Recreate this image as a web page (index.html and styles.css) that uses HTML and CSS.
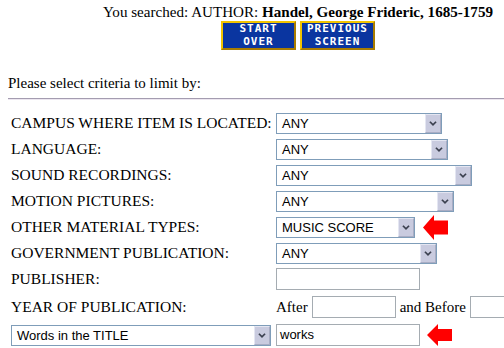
FILE: index.html
```html
<!DOCTYPE html>
<html>
<head>
<meta charset="utf-8">
<link rel="stylesheet" href="styles.css">
</head>
<body>
<div class="page">
  <div class="header">You searched: AUTHOR: <b>Handel, George Frideric, 1685-1759</b></div>
  <div class="navbtns">
    <span class="navbtn">START<br>OVER</span>
    <span class="navbtn">PREVIOUS<br>SCREEN</span>
  </div>
  <div class="intro">Please select criteria to limit by:</div>
  <hr class="rule">
  <div class="form">
    <div class="label">CAMPUS WHERE ITEM IS LOCATED:</div>
    <div class="field"><div class="sel w165"><span class="sel-text">ANY</span><span class="sel-btn"><svg width="16" height="19" viewBox="0 0 16 19"><path d="M4.5 7.5 L8 11 L11.5 7.5" fill="none" stroke="#3c4150" stroke-width="2"/></svg></span></div></div>

    <div class="label">LANGUAGE:</div>
    <div class="field"><div class="sel w171"><span class="sel-text">ANY</span><span class="sel-btn"><svg width="16" height="19" viewBox="0 0 16 19"><path d="M4.5 7.5 L8 11 L11.5 7.5" fill="none" stroke="#3c4150" stroke-width="2"/></svg></span></div></div>

    <div class="label">SOUND RECORDINGS:</div>
    <div class="field"><div class="sel w195"><span class="sel-text">ANY</span><span class="sel-btn"><svg width="16" height="19" viewBox="0 0 16 19"><path d="M4.5 7.5 L8 11 L11.5 7.5" fill="none" stroke="#3c4150" stroke-width="2"/></svg></span></div></div>

    <div class="label">MOTION PICTURES:</div>
    <div class="field"><div class="sel w177"><span class="sel-text">ANY</span><span class="sel-btn"><svg width="16" height="19" viewBox="0 0 16 19"><path d="M4.5 7.5 L8 11 L11.5 7.5" fill="none" stroke="#3c4150" stroke-width="2"/></svg></span></div></div>

    <div class="label">OTHER MATERIAL TYPES:</div>
    <div class="field"><div class="sel w138"><span class="sel-text">MUSIC SCORE</span><span class="sel-btn"><svg width="16" height="19" viewBox="0 0 16 19"><path d="M4.5 7.5 L8 11 L11.5 7.5" fill="none" stroke="#3c4150" stroke-width="2"/></svg></span></div><svg class="arrow" width="25" height="25" viewBox="0 0 25 25"><polygon points="0,12.5 11,0 11,5.5 25,5.5 25,19.5 11,19.5 11,25" fill="#ff0000"/></svg></div>

    <div class="label">GOVERNMENT PUBLICATION:</div>
    <div class="field"><div class="sel w160"><span class="sel-text">ANY</span><span class="sel-btn"><svg width="16" height="19" viewBox="0 0 16 19"><path d="M4.5 7.5 L8 11 L11.5 7.5" fill="none" stroke="#3c4150" stroke-width="2"/></svg></span></div></div>

    <div class="label">PUBLISHER:</div>
    <div class="field"><span class="txt w143"></span></div>

    <div class="label year">YEAR OF PUBLICATION:</div>
    <div class="field year"><span>After</span><span class="txt w83"></span><span>and Before</span><span class="txt w83"></span></div>

    <div class="label"><div class="sel w259"><span class="sel-text">Words in the TITLE</span><span class="sel-btn"><svg width="16" height="19" viewBox="0 0 16 19"><path d="M4.5 7.5 L8 11 L11.5 7.5" fill="none" stroke="#3c4150" stroke-width="2"/></svg></span></div></div>
    <div class="field"><span class="txt w143"><span class="val">works</span></span><svg class="arrow arrow2" width="25" height="22" viewBox="0 0 25 22"><polygon points="0,11 11,0 11,5 25,5 25,17 11,17 11,22" fill="#ff0000"/></svg></div>
  </div>
</div>
</body>
</html>
```

FILE: styles.css
```css
body {
  margin: 0 0 0 8px;
  background: #ffffff;
  color: #000000;
  font-family: "Liberation Serif", "Times New Roman", serif;
  font-size: 15.5px;
}
.page {
  width: 496px;
  overflow: hidden;
}
.header {
  margin-left: 84px;
  width: 412px;
  text-align: center;
  padding-top: 3px;
  line-height: 18px;
  font-size: 15.1px;
  white-space: nowrap;
}
.navbtns {
  margin-left: 84px;
  width: 412px;
  display: flex;
  justify-content: center;
  gap: 4px;
  height: 29px;
}
.navbtn {
  box-sizing: border-box;
  width: 75px;
  height: 29px;
  background: #0a35a0;
  border: 2px solid #f2c400;
  border-right-color: #a87c00;
  border-bottom-color: #a87c00;
  color: #ffffff;
  font-family: "DejaVu Sans Mono", monospace;
  font-weight: bold;
  font-size: 11px;
  line-height: 12.5px;
  letter-spacing: 1px;
  text-align: center;
}
.intro {
  margin-top: 24px;
  line-height: 18px;
  font-size: 15px;
}
.rule {
  margin: 6px 0 0 0;
  height: 0;
  border: 0;
  border-top: 1px solid #a49cb0;
  border-bottom: 1px solid #ece6f0;
}
.form {
  display: grid;
  grid-template-columns: 262px auto;
  column-gap: 3px;
  row-gap: 4px;
  padding-left: 3px;
  margin-top: 12px;
}
.label {
  display: flex;
  align-items: center;
  height: 22px;
  white-space: nowrap;
}
.field {
  display: flex;
  align-items: center;
  height: 22px;
  white-space: nowrap;
}
.year {
  height: 26px;
}
.field.year {
  gap: 4px;
  font-size: 15px;
}
.sel {
  display: flex;
  align-items: stretch;
  box-sizing: border-box;
  height: 21px;
  border: 1px solid #7f9db9;
  background: #ffffff;
  font-family: "Liberation Sans", Arial, sans-serif;
  font-size: 13px;
}
.sel-text {
  flex: 1;
  padding-left: 5px;
  line-height: 19px;
}
.sel-btn {
  box-sizing: border-box;
  width: 16px;
  background: #c9cbdf;
  border: 1px solid #e4e6f2;
  border-right-color: #a9adc4;
  border-bottom-color: #a9adc4;
  display: flex;
  align-items: center;
  justify-content: center;
}
.sel-btn svg {
  display: block;
}
.txt {
  display: inline-block;
  flex-shrink: 0;
  box-sizing: border-box;
  height: 22px;
  border: 1px solid #a5acb2;
  background: #ffffff;
  font-family: "Liberation Sans", Arial, sans-serif;
  font-size: 13px;
  line-height: 20px;
}
.val {
  padding-left: 3px;
}
.arrow {
  display: block;
  flex-shrink: 0;
  margin-left: 8px;
}
.arrow2 {
  margin-left: 7px;
}
.w165 { width: 166px; }
.w171 { width: 172px; }
.w195 { width: 196px; }
.w177 { width: 178px; }
.w138 { width: 139px; }
.w160 { width: 161px; }
.w259 { width: 260px; }
.w143 { width: 144px; }
.w83 { width: 84px; }
```
